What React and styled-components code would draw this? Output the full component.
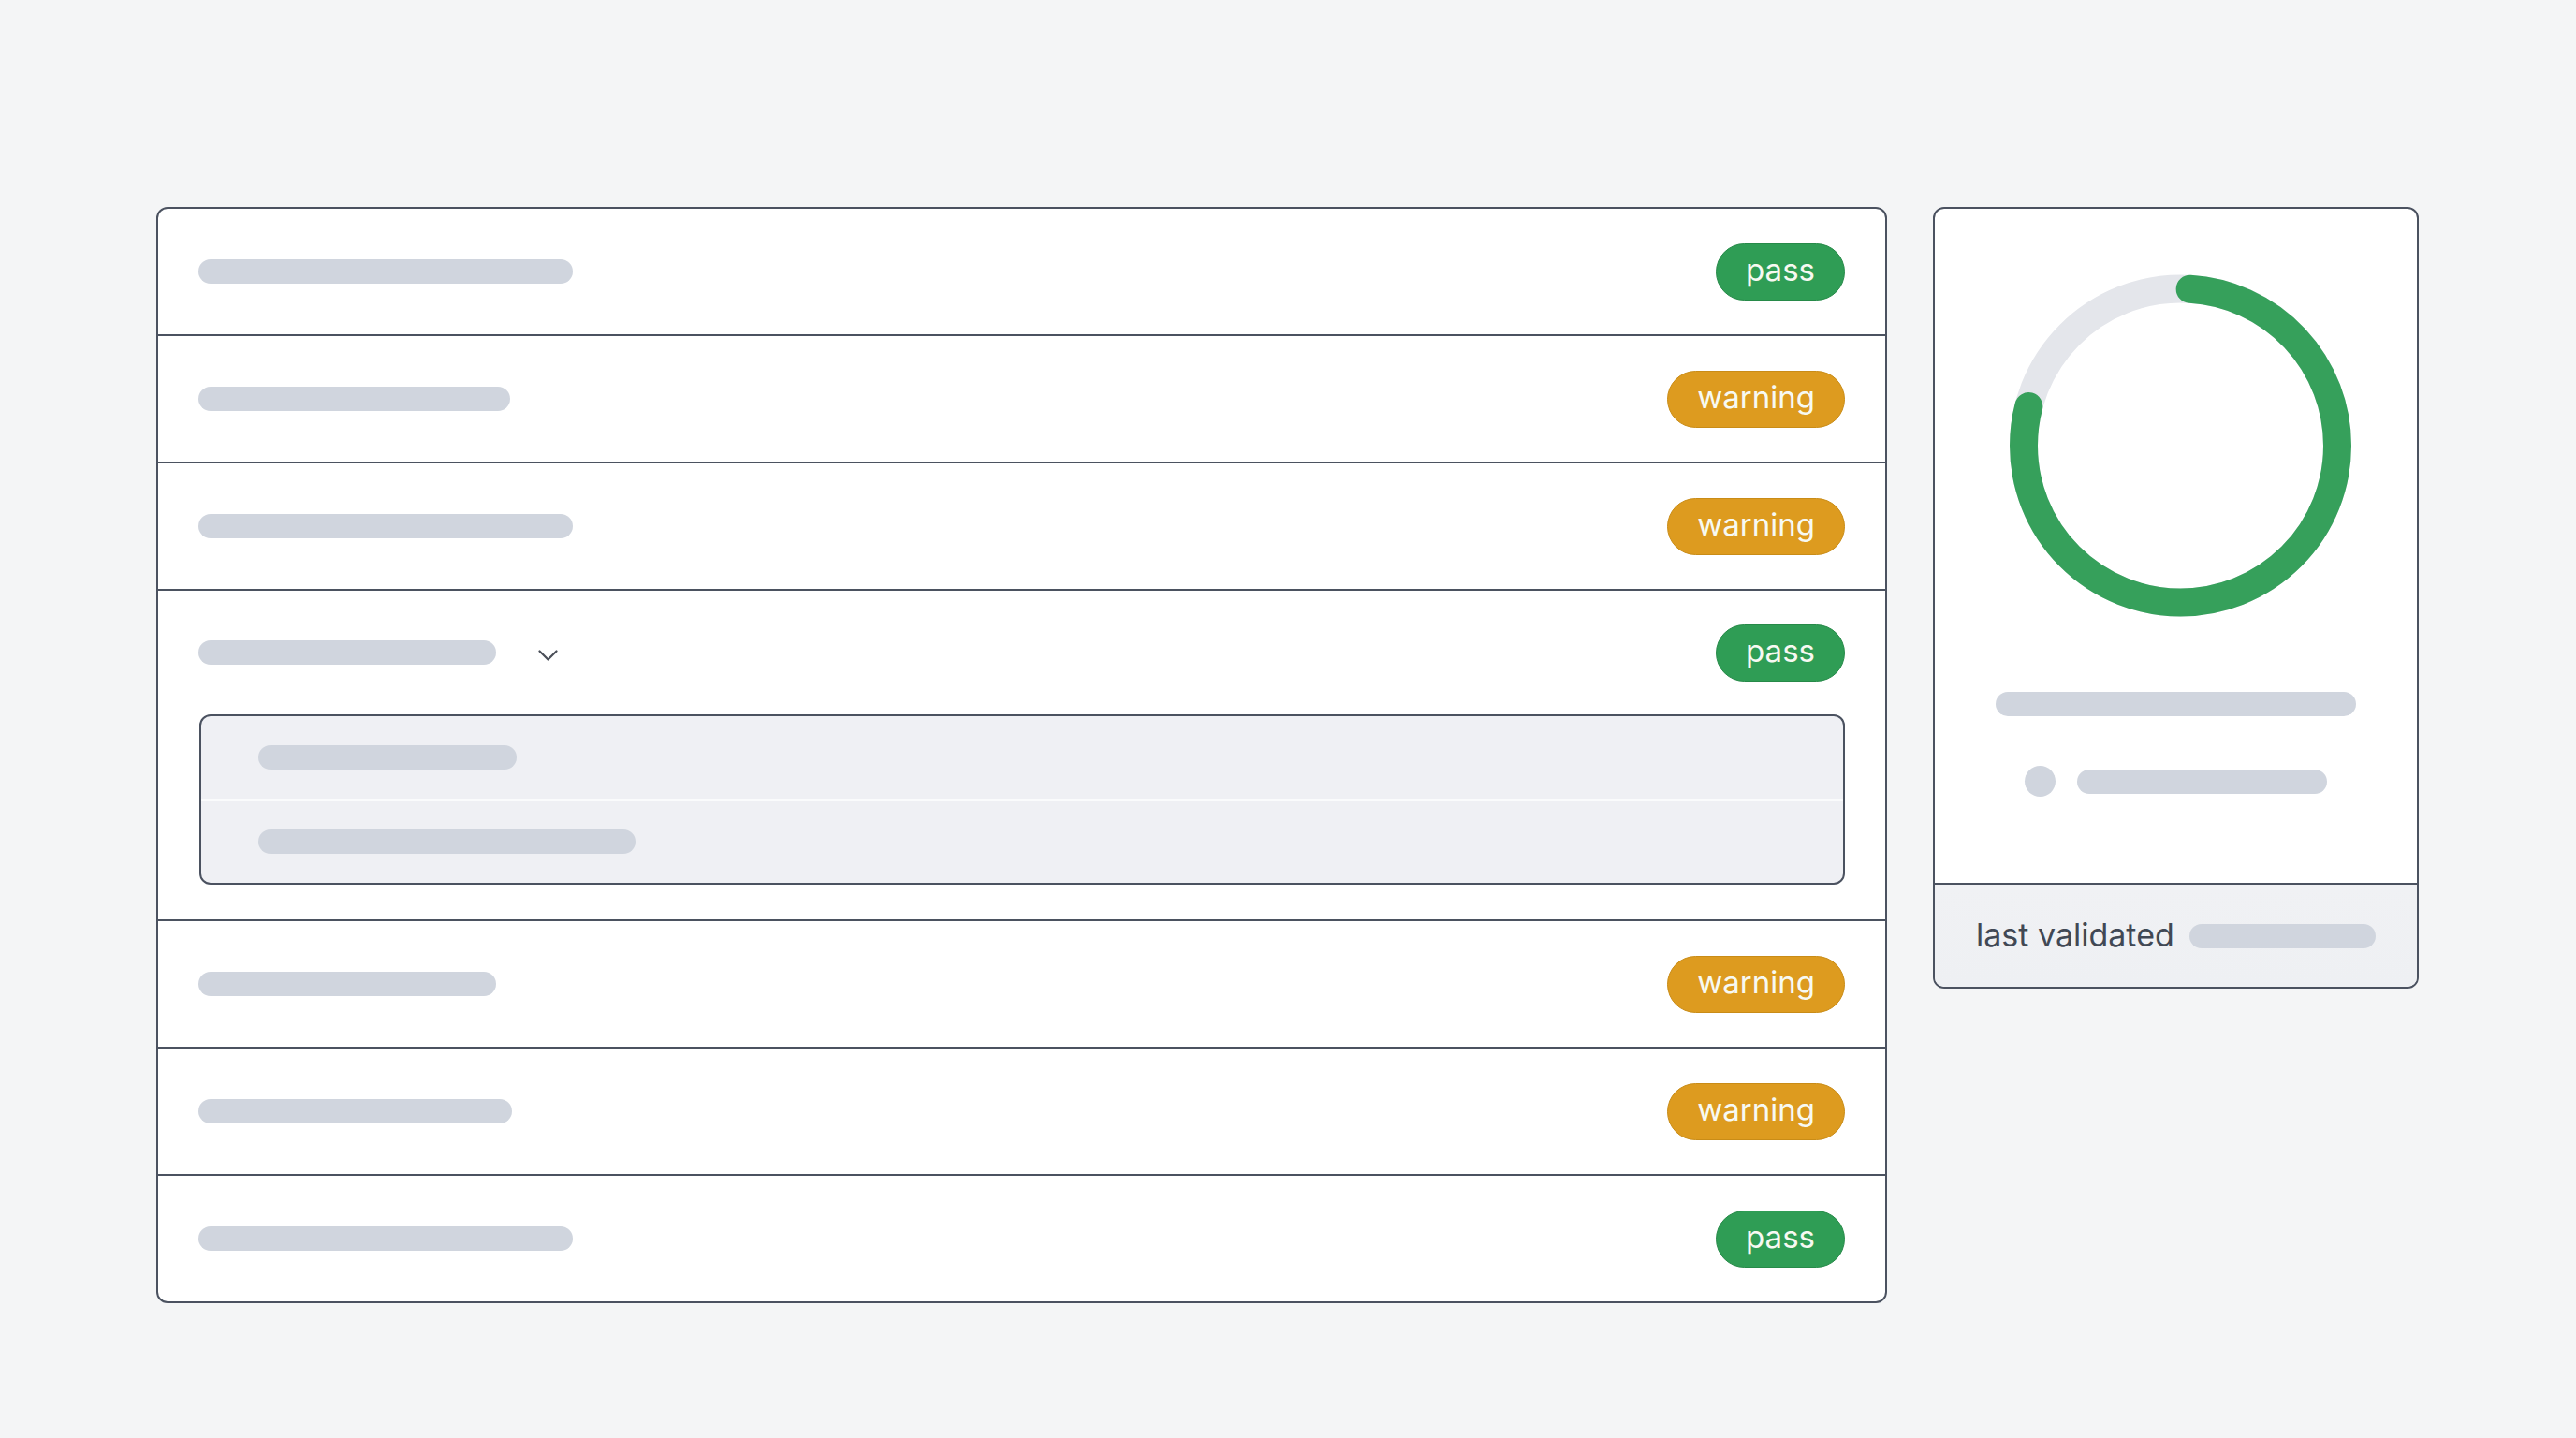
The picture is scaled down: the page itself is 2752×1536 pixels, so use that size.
import React from "react";
import styled, { createGlobalStyle } from "styled-components";

const GlobalStyle = createGlobalStyle`
  html, body {
    margin: 0;
    padding: 0;
    background: #f4f5f6;
    font-family: Inter, "Noto Sans", "Liberation Sans", sans-serif;
  }
  * { box-sizing: border-box; }
`;

const BORDER = "#4b5260";
const SKELETON = "#d0d5de";

const Page = styled.div`
  display: flex;
  align-items: flex-start;
  gap: 49px;
  padding: 221px 0 0 167px;
  min-height: 1536px;
`;

const ListPanel = styled.div`
  width: 1849px;
  background: #ffffff;
  border: 2px solid ${BORDER};
  border-radius: 12px;
  overflow: hidden;
`;

const Row = styled.div`
  display: flex;
  flex-direction: column;
  & + & {
    border-top: 2px solid ${BORDER};
  }
  padding-bottom: ${(p) => (p.$expanded ? "37px" : "0")};
`;

const RowHeader = styled.div`
  display: flex;
  align-items: center;
  height: ${(p) => (p.$expanded ? "132px" : "134px")};
  padding: 0 43px 0 43px;
`;

const Bar = styled.div`
  width: ${(p) => p.$w}px;
  height: 26px;
  border-radius: 13px;
  background: ${SKELETON};
  flex-shrink: 0;
`;

const Chevron = styled.svg`
  margin-left: 45px;
  margin-top: 5px;
  width: 21px;
  height: 12px;
`;

const Spacer = styled.div`
  flex: 1;
`;

const Badge = styled.span`
  display: inline-flex;
  align-items: center;
  justify-content: center;
  height: 61px;
  padding: 0 31px 3px;
  border-radius: 31px;
  font-size: 33px;
  line-height: 1;
  color: #f7f9f2;
  background: ${(p) => (p.$status === "pass" ? "#2f9d55" : "#dd9b1f")};
  border: 1.5px solid ${(p) => (p.$status === "pass" ? "#278a49" : "#c98c17")};
`;

const Details = styled.div`
  margin: 0 43px 0 44px;
  height: 182px;
  border: 2px solid ${BORDER};
  border-radius: 12px;
  background: #eff0f4;
  display: flex;
  flex-direction: column;
  overflow: hidden;
`;

const DetailLine = styled.div`
  flex: 1;
  display: flex;
  align-items: center;
  padding-left: 61px;
  & + & {
    border-top: 3px solid #fafbfc;
  }
`;

const SidePanel = styled.div`
  width: 519px;
  background: #ffffff;
  border: 2px solid ${BORDER};
  border-radius: 12px;
  overflow: hidden;
  display: flex;
  flex-direction: column;
`;

const Summary = styled.div`
  height: 720px;
  display: flex;
  flex-direction: column;
  align-items: center;
  padding-top: 70px;
`;

const Donut = styled.svg`
  width: 365px;
  height: 366px;
  margin-left: 9px;
`;

const SummaryBar = styled(Bar)`
  margin-top: 80px;
`;

const LegendRow = styled.div`
  display: flex;
  align-items: center;
  gap: 23px;
  margin-top: 53px;
`;

const Dot = styled.div`
  width: 33px;
  height: 33px;
  border-radius: 50%;
  background: ${SKELETON};
`;

const Footer = styled.div`
  border-top: 2px solid ${BORDER};
  height: 111px;
  background: linear-gradient(180deg, #f0f1f4 0%, #eef0f3 100%);
  display: flex;
  align-items: center;
  gap: 16px;
  padding: 0 44px 0 44px;
`;

const FooterLabel = styled.span`
  font-size: 34px;
  color: #414854;
  white-space: nowrap;
  padding-bottom: 2px;
`;

const FooterBar = styled(Bar)`
  flex: 1;
  width: auto;
`;

const rows = [
  { w: 400, status: "pass" },
  { w: 333, status: "warning" },
  { w: 400, status: "warning" },
  { w: 318, status: "pass", expanded: true },
  { w: 318, status: "warning" },
  { w: 335, status: "warning" },
  { w: 400, status: "pass" },
];

function ProgressRing() {
  const r = 167.5;
  return (
    <Donut viewBox="0 0 365 366">
      <circle cx="182.5" cy="183" r={r} fill="none" stroke="#e4e6eb" strokeWidth="30" />
      <circle
        cx="182.5"
        cy="183"
        r={r}
        fill="none"
        stroke="#36a05b"
        strokeWidth="30"
        strokeLinecap="round"
        pathLength="360"
        strokeDasharray="281 360"
        strokeDashoffset="-3.5"
        transform="rotate(-90 182.5 183)"
      />
    </Donut>
  );
}

export default function App() {
  return (
    <>
      <GlobalStyle />
      <Page>
        <ListPanel>
          {rows.map((row, i) => (
            <Row key={i} $expanded={row.expanded}>
              <RowHeader $expanded={row.expanded}>
                <Bar $w={row.w} />
                {row.expanded && (
                  <Chevron viewBox="0 0 21 12">
                    <path d="M1.5 1.5 L10.5 10.5 L19.5 1.5" fill="none" stroke="#4a4f58" strokeWidth="2.2" strokeLinecap="round" strokeLinejoin="round" />
                  </Chevron>
                )}
                <Spacer />
                <Badge $status={row.status}>{row.status}</Badge>
              </RowHeader>
              {row.expanded && (
                <Details>
                  <DetailLine>
                    <Bar $w={276} />
                  </DetailLine>
                  <DetailLine>
                    <Bar $w={403} />
                  </DetailLine>
                </Details>
              )}
            </Row>
          ))}
        </ListPanel>
        <SidePanel>
          <Summary>
            <ProgressRing />
            <SummaryBar $w={385} />
            <LegendRow>
              <Dot />
              <Bar $w={267} />
            </LegendRow>
          </Summary>
          <Footer>
            <FooterLabel>last validated</FooterLabel>
            <FooterBar />
          </Footer>
        </SidePanel>
      </Page>
    </>
  );
}
